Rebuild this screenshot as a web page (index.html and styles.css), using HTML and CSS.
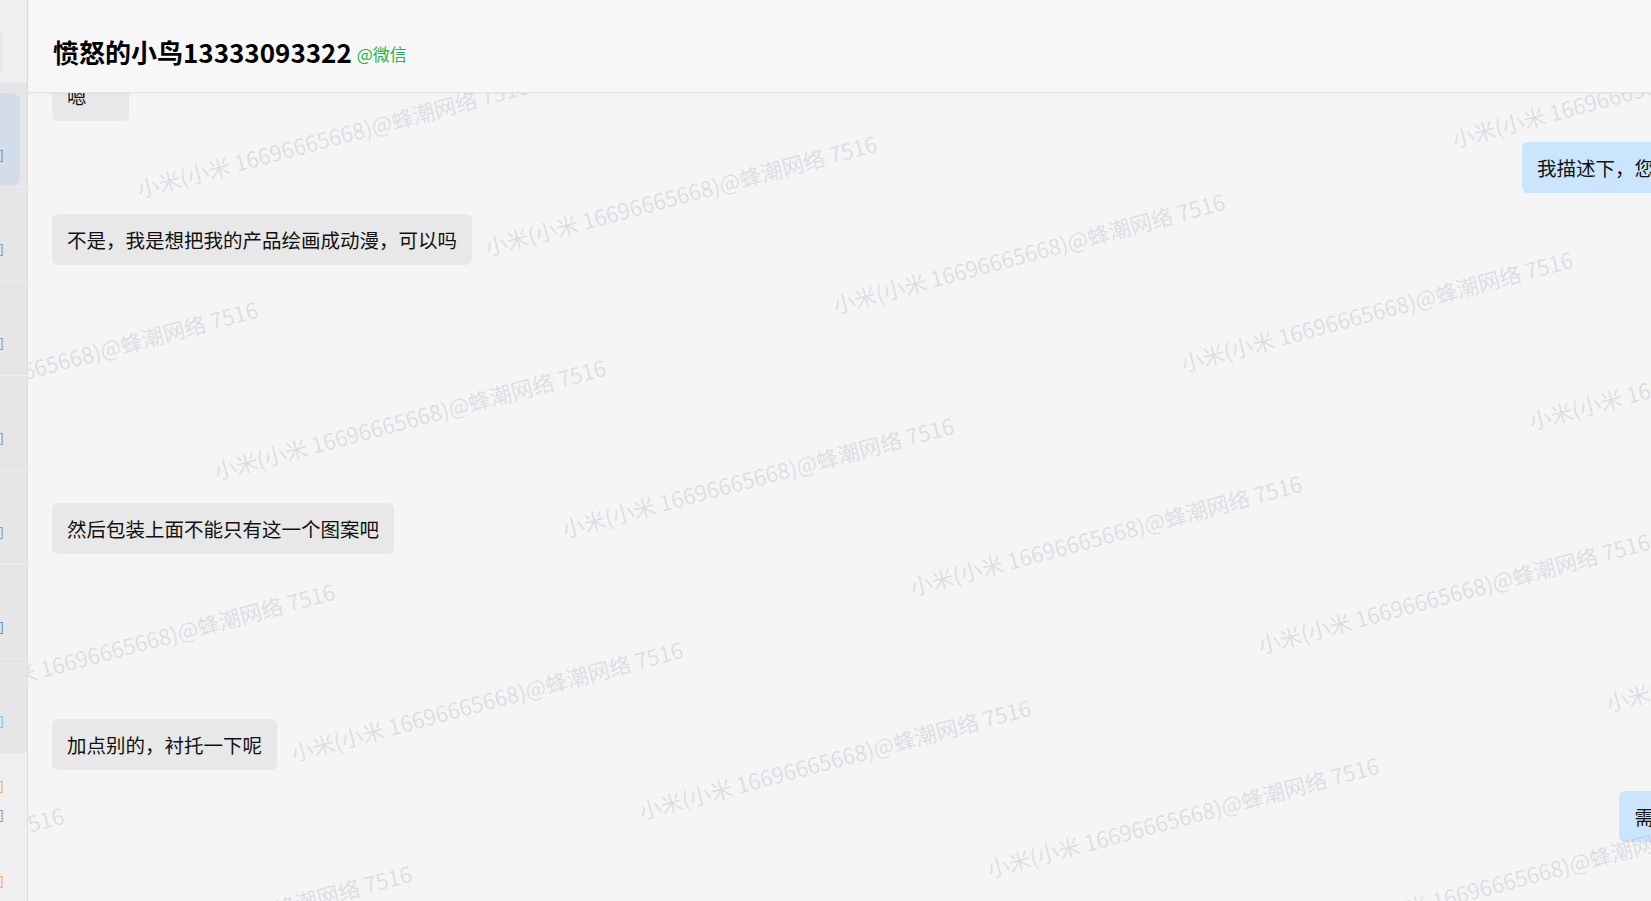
FILE: index.html
```html
<!DOCTYPE html>
<html lang="zh-CN">
<head>
  <meta charset="UTF-8">
  <meta name="viewport" content="width=device-width, initial-scale=1.0">
  <title>会话</title>
  <link rel="stylesheet" href="styles.css">
</head>
<body>
  <div class="app">
    <aside class="sidebar">
      <div class="sidebar-inner">
        <div class="search">
          <div class="search-box">搜索</div>
        </div>

        <div class="conv-group pinned">
          <div class="conv active">
            <div class="conv-body">
              <p class="conv-name">愤怒的小鸟13333093322</p>
              <p class="conv-preview">[图片]</p>
            </div>
          </div>
          <div class="conv">
            <div class="conv-body">
              <p class="conv-name">阿杰</p>
              <p class="conv-preview">[图片]</p>
            </div>
          </div>
          <div class="conv">
            <div class="conv-body">
              <p class="conv-name">陈女士</p>
              <p class="conv-preview">[图片]</p>
            </div>
          </div>
          <div class="conv">
            <div class="conv-body">
              <p class="conv-name">周周</p>
              <p class="conv-preview">[图片]</p>
            </div>
          </div>
          <div class="conv">
            <div class="conv-body">
              <p class="conv-name">林先生</p>
              <p class="conv-preview">[图片]</p>
            </div>
          </div>
          <div class="conv">
            <div class="conv-body">
              <p class="conv-name">小王</p>
              <p class="conv-preview preview-link">[链接]</p>
            </div>
          </div>
          <div class="conv">
            <div class="conv-body">
              <p class="conv-name">Lily</p>
              <p class="conv-preview preview-file">[文件]</p>
            </div>
          </div>
        </div>

        <div class="conv-group">
          <div class="conv">
            <div class="conv-body">
              <p class="conv-name">刘总<span class="flag">[待跟进]</span></p>
              <p class="conv-preview">[图片]</p>
            </div>
          </div>
          <div class="conv">
            <div class="conv-body">
              <p class="conv-name">赵小姐<span class="flag">[待跟进]</span></p>
              <p class="conv-preview">好的</p>
            </div>
          </div>
        </div>
      </div>
    </aside>

    <main class="chat">
      <header class="chat-header">
        <div class="chat-title">
          <h1>愤怒的小鸟13333093322</h1>
          <span class="source">@微信</span>
        </div>
      </header>

      <div class="chat-body">
        <div class="msg-list">
          <div class="msg left"><div class="bubble">嗯</div></div>
          <div class="msg right"><div class="bubble">我描述下，您看对不对</div></div>
          <div class="msg left"><div class="bubble">不是，我是想把我的产品绘画成动漫，可以吗</div></div>
          <div class="msg left"><div class="media media-tall"></div></div>
          <div class="msg left"><div class="bubble">然后包装上面不能只有这一个图案吧</div></div>
          <div class="msg left"><div class="media media-short"></div></div>
          <div class="msg left"><div class="bubble">加点别的，衬托一下呢</div></div>
          <div class="msg right"><div class="bubble">需要加钱吗</div></div>
        </div>
        <div class="watermark" id="watermark"></div>
      </div>
    </main>
  </div>

  <script>
    // Watermark tiles, laid out on a skewed lattice over the chat area
    const layer = document.getElementById('watermark');
    const text = '小米(小米 16696665668)@蜂潮网络 7516';
    const origin = { x: 112, y: 106 };
    const stepA = { x: 348, y: 58 };
    const stepB = { x: 77, y: 282 };

    for (let j = -2; j <= 4; j++) {
      for (let i = -4; i <= 6; i++) {
        const x = origin.x + i * stepA.x + j * stepB.x;
        const y = origin.y + i * stepA.y + j * stepB.y;
        if (x < -450 || x > 1700 || y < -100 || y > 1000) continue;
        const span = document.createElement('span');
        span.textContent = text;
        span.style.left = x + 'px';
        span.style.top = (y - 22) + 'px';
        layer.appendChild(span);
      }
    }
  </script>
</body>
</html>
```

FILE: styles.css
```css
html, body {
  margin: 0;
  height: 100%;
}

body {
  overflow: hidden;
  background: #f5f5f5;
  font-family: "Noto Sans CJK SC", "Noto Sans", sans-serif;
  color: #111;
}

p {
  margin: 0;
}

.app {
  display: flex;
  width: 1771px;
  height: 100vh;
}

/* conversation list (scrolled out to the left) */
.sidebar {
  flex: none;
  width: 27px;
  background: #efefef;
  border-right: 1px solid #dcdcdc;
  overflow: hidden;
}

.sidebar-inner {
  width: 327px;
  margin-left: -300px;
}

.search {
  height: 82px;
  padding: 30px 24px 0 12px;
  box-sizing: border-box;
}

.search-box {
  height: 45px;
  line-height: 45px;
  padding-left: 12px;
  border-radius: 6px;
  background: #e7e7e7;
  color: #999;
  font-size: 14px;
}

.pinned {
  background: #e6e6e8;
  padding-top: 11px;
}

.conv {
  border-bottom: 1px solid #eeeef0;
}

.conv-group:not(.pinned) .conv {
  border-bottom-color: #efefef;
}

.conv-body {
  height: 93.4px;
  margin-right: 7px;
  padding: 0 16px 0 72px;
  box-sizing: border-box;
  border-radius: 8px;
  display: flex;
  flex-direction: column;
  justify-content: center;
  gap: 6px;
}

.conv.active .conv-body {
  background: #d3dde9;
}

.conv-name {
  display: flex;
  justify-content: space-between;
  font-size: 15px;
  line-height: 24px;
  color: #222;
}

.flag {
  font-size: 13px;
  color: #f5a623;
}

.conv-preview {
  text-align: right;
  font-size: 13px;
  line-height: 22px;
  color: #7f8aa3;
}

.preview-link {
  color: #3f82d8;
}

.preview-file {
  color: #6cb6ee;
}

/* chat panel */
.chat {
  flex: 1;
  min-width: 0;
  display: flex;
  flex-direction: column;
}

.chat-header {
  flex: none;
  position: relative;
  z-index: 2;
  height: 93px;
  padding: 12px 0 0 25px;
  box-sizing: border-box;
  display: flex;
  align-items: center;
  background: #f7f7f7;
  border-bottom: 1px solid #e3e3e3;
  box-shadow: 0 1px 3px rgba(0, 0, 0, 0.04);
}

.chat-title {
  display: flex;
  align-items: center;
}

.chat-title h1 {
  margin: 0;
  font-size: 26px;
  font-weight: 700;
  line-height: 1.2;
  color: #000;
}

.source {
  margin: 2px 0 0 5px;
  font-size: 17px;
  color: #27b34a;
}

.chat-body {
  flex: 1;
  position: relative;
  overflow: hidden;
}

.msg-list {
  display: flex;
  flex-direction: column;
  gap: 21px;
  margin-top: -23px;
  padding: 0 24px;
}

.msg {
  display: flex;
}

.msg.right {
  justify-content: flex-end;
}

.bubble {
  min-width: 77px;
  max-width: 70%;
  box-sizing: border-box;
  padding: 12px 15px;
  border-radius: 6px;
  background: #e8e8e8;
  font-size: 19.5px;
  line-height: 27px;
  color: #111;
}

.msg.right .bubble {
  background: #cbe5fd;
}

.media {
  width: 200px;
}

.media-tall {
  height: 196px;
}

.media-short {
  height: 123px;
}

.watermark {
  position: absolute;
  inset: 0;
  z-index: 1;
  pointer-events: none;
}

.watermark span {
  position: absolute;
  white-space: nowrap;
  font-size: 22px;
  line-height: 1;
  color: rgba(150, 150, 180, 0.26);
  transform: rotate(-15deg);
  transform-origin: 0 100%;
}
```
